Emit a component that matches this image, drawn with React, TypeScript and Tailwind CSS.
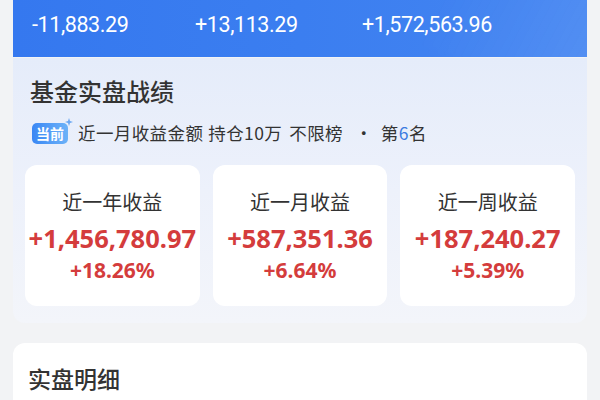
import React from "react";

const cards = [
  { title: "近一年收益", value: "+1,456,780.97", pct: "+18.26%" },
  { title: "近一月收益", value: "+587,351.36", pct: "+6.64%" },
  { title: "近一周收益", value: "+187,240.27", pct: "+5.39%" },
];

export default function App() {
  return (
    <div
      className="w-[600px] h-[400px] overflow-hidden bg-[#f2f3f5] px-[13px]"
      style={{ fontFamily: '"Noto Sans CJK SC", "Noto Sans", sans-serif' }}
    >
      {/* blue banner */}
      <div className="relative h-[57px] bg-gradient-to-r from-[#3578ef] via-[#3b7ef0] to-[#4485f1] overflow-hidden">
        <div className="absolute right-[-60px] top-[-70px] w-[200px] h-[170px] rotate-[28deg] bg-gradient-to-r from-white/0 via-white/5 to-white/10 blur-[6px]" />
        <div
          className="relative flex items-center h-[50px] text-white text-[21.5px] font-normal tracking-[-0.4px]"
          style={{ fontFamily: 'Roboto, "Noto Sans", sans-serif' }}
        >
          <div className="w-[168px] pl-[19px]">-11,883.29</div>
          <div className="w-[166px] pl-[14px]">+13,113.29</div>
          <div className="pl-[15px]">+1,572,563.96</div>
        </div>
      </div>

      {/* fund performance card */}
      <div className="mt-[1px] h-[265px] rounded-b-[12px] bg-gradient-to-b from-[#e5ecfa] via-[#edf1fb] to-[#f3f5fa] px-[12px] pt-[18px]">
        <div className="text-[24px] leading-[30px] font-medium text-[#333333] pl-[5px]">
          基金实盘战绩
        </div>
        <div className="mt-[15px] flex items-center h-[24px]">
          <div className="relative ml-[7px]">
            <div className="h-[21px] w-[36px] rounded-[5px] bg-gradient-to-r from-[#3a87f4] to-[#6cb2f8] flex items-center justify-center text-white text-[14px] font-bold leading-none">
              当前
            </div>
            <svg
              className="absolute right-[-5px] top-[-5px]"
              width="8"
              height="8"
              viewBox="0 0 8 8"
            >
              <path d="M4 0 L5 3 L8 4 L5 5 L4 8 L3 5 L0 4 L3 3 Z" fill="#6aa7f2" />
            </svg>
          </div>
          <div className="ml-[10px] flex items-center text-[17.5px] tracking-[0.4px] text-[#333333] leading-none whitespace-nowrap">
            <span>近一月收益金额</span>
            <span className="ml-[5px]">持仓10万</span>
            <span className="ml-[7px]">不限榜</span>
            <span className="ml-[12px] mr-[8px]">·</span>
            <span>
              第<span className="text-[#3b7be0]">6</span>名
            </span>
          </div>
        </div>
        <div className="mt-[20px] grid grid-cols-3 gap-[13px]">
          {cards.map((c) => (
            <div
              key={c.title}
              className="h-[141px] rounded-[12px] bg-white flex flex-col items-center pt-[25px]"
            >
              <div className="text-[20px] leading-[24px] text-[#333333]">{c.title}</div>
              <div
                className="mt-[10px] text-[25.5px] leading-[28px] font-bold text-[#d43c3c]"
                style={{ fontFamily: '"Noto Sans", Roboto, sans-serif' }}
              >
                {c.value}
              </div>
              <div
                className="mt-[6px] text-[21px] leading-[24px] font-bold text-[#d43c3c]"
                style={{ fontFamily: '"Noto Sans", Roboto, sans-serif' }}
              >
                {c.pct}
              </div>
            </div>
          ))}
        </div>
      </div>

      {/* detail card */}
      <div className="mt-[20px] h-[80px] rounded-t-[12px] bg-white px-[15px] pt-[20px]">
        <div className="text-[23px] leading-[30px] font-medium text-[#333333]">实盘明细</div>
      </div>
    </div>
  );
}
